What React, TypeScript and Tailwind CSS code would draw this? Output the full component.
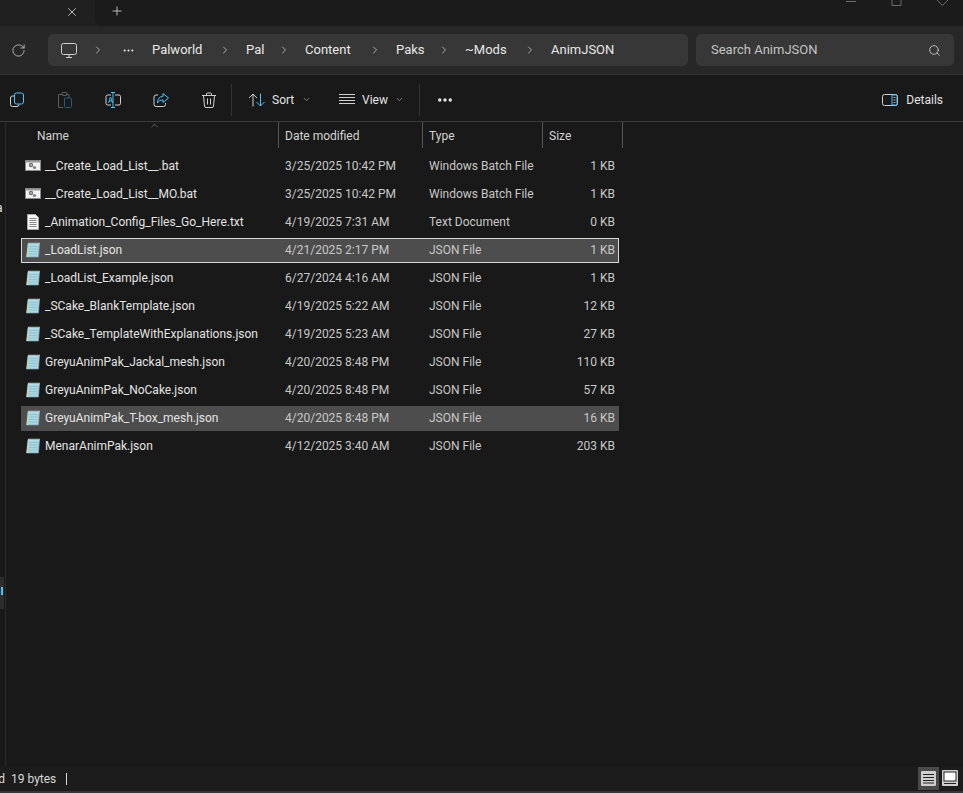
import { ChevronDown, ChevronRight, ChevronUp, MoreHorizontal, Plus, RotateCw, Search, X } from "lucide-react"

const font = "font-['Roboto','Liberation_Sans',sans-serif]"

interface FileRow {
  name: string
  date: string
  type: string
  size: string
  icon: "bat" | "txt" | "json"
  state?: "focus" | "selected"
}

const files: FileRow[] = [
  { name: "__Create_Load_List__.bat", date: "3/25/2025 10:42 PM", type: "Windows Batch File", size: "1 KB", icon: "bat" },
  { name: "__Create_Load_List__MO.bat", date: "3/25/2025 10:42 PM", type: "Windows Batch File", size: "1 KB", icon: "bat" },
  { name: "_Animation_Config_Files_Go_Here.txt", date: "4/19/2025 7:31 AM", type: "Text Document", size: "0 KB", icon: "txt" },
  { name: "_LoadList.json", date: "4/21/2025 2:17 PM", type: "JSON File", size: "1 KB", icon: "json", state: "focus" },
  { name: "_LoadList_Example.json", date: "6/27/2024 4:16 AM", type: "JSON File", size: "1 KB", icon: "json" },
  { name: "_SCake_BlankTemplate.json", date: "4/19/2025 5:22 AM", type: "JSON File", size: "12 KB", icon: "json" },
  { name: "_SCake_TemplateWithExplanations.json", date: "4/19/2025 5:23 AM", type: "JSON File", size: "27 KB", icon: "json" },
  { name: "GreyuAnimPak_Jackal_mesh.json", date: "4/20/2025 8:48 PM", type: "JSON File", size: "110 KB", icon: "json" },
  { name: "GreyuAnimPak_NoCake.json", date: "4/20/2025 8:48 PM", type: "JSON File", size: "57 KB", icon: "json" },
  { name: "GreyuAnimPak_T-box_mesh.json", date: "4/20/2025 8:48 PM", type: "JSON File", size: "16 KB", icon: "json", state: "selected" },
  { name: "MenarAnimPak.json", date: "4/12/2025 3:40 AM", type: "JSON File", size: "203 KB", icon: "json" },
]

function FileIcon({ kind }: { kind: FileRow["icon"] }) {
  if (kind === "bat") {
    return (
      <svg width="16" height="16" viewBox="0 0 16 16" className="shrink-0">
        <rect x="0.5" y="2.5" width="15" height="10" fill="#f2f2f2" stroke="#8a8a8a" />
        <rect x="1" y="3" width="14" height="1.5" fill="#9a9a9a" />
        <circle cx="6" cy="7" r="2.2" fill="#6f6f6f" />
        <circle cx="6" cy="7" r="0.8" fill="#e6e6e6" />
        <circle cx="9.5" cy="9.5" r="1.6" fill="#7f7f7f" />
      </svg>
    )
  }
  if (kind === "txt") {
    return (
      <svg width="16" height="16" viewBox="0 0 16 16" className="shrink-0">
        <path d="M2.5 0.5H10.5L13.5 3.5V15.5H2.5Z" fill="#f4f4f4" stroke="#a8a8a8" />
        <path d="M4.5 4.5H11.5M4.5 6.5H11.5M4.5 8.5H11.5M4.5 10.5H11.5M4.5 12.5H11.5" stroke="#8c8c8c" />
      </svg>
    )
  }
  return (
    <svg width="16" height="16" viewBox="0 0 16 16" className="shrink-0">
      <path d="M3 1.5H14.5L13.5 15H1.5Z" fill="#a9d6e2" stroke="#6ea5b5" strokeWidth="0.7" />
      <path d="M3 1.5H3.6V15H1.5Z" fill="#d9c9a6" />
      <path d="M4.5 4.5H13M4.2 7H12.8M4 9.5H12.6M3.8 12H12.4" stroke="#8dc0cf" strokeWidth="0.8" />
      <path d="M4 0.5V2.5M6 0.5V2.5M8 0.5V2.5M10 0.5V2.5M12 0.5V2.5M14 0.5V2.5" stroke="#f0f0f0" strokeWidth="0.8" />
    </svg>
  )
}

function ToolbarIcons() {
  return (
    <div className="flex items-center -ml-[7px]">
      <button className="w-[48px] flex justify-center">
        <svg width="16" height="16" viewBox="0 0 16 16" fill="none">
          <rect x="5.5" y="1" width="9" height="11" rx="2" stroke="#4cc2ff" />
          <path d="M5 4H3.5A2 2 0 0 0 1.5 6V12.5A2 2 0 0 0 3.5 14.5H8A2 2 0 0 0 10 12.5" stroke="#d0d0d0" />
        </svg>
      </button>
      <button className="w-[48px] flex justify-center">
        <svg width="16" height="16" viewBox="0 0 16 16" fill="none">
          <path d="M9 2.5H12V6M6 2.5H1.5V15.5H6" stroke="#5c5c5c" />
          <rect x="5" y="0.5" width="5" height="3" rx="1" stroke="#5c5c5c" />
          <rect x="7.5" y="6" width="7" height="9.5" rx="1" stroke="#235a78" />
        </svg>
      </button>
      <button className="w-[48px] flex justify-center">
        <svg width="16" height="16" viewBox="0 0 16 16" fill="none">
          <path d="M6 3H2.5A1.5 1.5 0 0 0 1 4.5V11.5A1.5 1.5 0 0 0 2.5 13H6M10 3H14A1.5 1.5 0 0 1 15.5 4.5V11.5A1.5 1.5 0 0 1 14 13H10" stroke="#d0d0d0" />
          <path d="M8 0.5V15.5M6 0.5H10M6 15.5H10" stroke="#4cc2ff" />
          <path d="M3.5 11L5.2 5.5H6L7.5 11M4.2 9H7" stroke="#4cc2ff" strokeWidth="0.9" />
        </svg>
      </button>
      <button className="w-[48px] flex justify-center">
        <svg width="16" height="16" viewBox="0 0 16 16" fill="none">
          <path d="M5 3H3A2 2 0 0 0 1 5V12.5A2 2 0 0 0 3 14.5H10.5A2 2 0 0 0 12.5 12.5V11" stroke="#d0d0d0" />
          <path d="M10 1.5L15.5 6L10 10.5V8C7 8 5.5 9 4.5 11C4.5 7 6.5 4.5 10 4.2Z" stroke="#4cc2ff" />
        </svg>
      </button>
      <button className="w-[48px] flex justify-center">
        <svg width="16" height="16" viewBox="0 0 16 16" fill="none" stroke="#d0d0d0">
          <path d="M1 3.5H15M5.5 3.5V2A1 1 0 0 1 6.5 1H9.5A1 1 0 0 1 10.5 2V3.5M2.5 3.5L3.5 14A1.5 1.5 0 0 0 5 15.5H11A1.5 1.5 0 0 0 12.5 14L13.5 3.5M6.5 6.5V12.5M9.5 6.5V12.5" />
        </svg>
      </button>
    </div>
  )
}

const crumbs = [
  { label: "Palworld", width: "w-[52px]" },
  { label: "Pal", width: "w-[17px]" },
  { label: "Content", width: "w-[49px]" },
  { label: "Paks", width: "w-[27px]" },
  { label: "~Mods", width: "w-[44px]" },
]

function Row({ file }: { file: FileRow }) {
  const rowStyle =
    file.state === "focus"
      ? "bg-[#4d4d4d] border border-[#d8d8d8]"
      : file.state === "selected"
        ? "bg-[#4d4d4d] border border-[#4d4d4d]"
        : "border border-transparent"
  return (
    <div className="h-[28px] flex items-center ml-[15px]">
      <div className={`w-[598px] h-[25px] flex items-center text-[12px] whitespace-nowrap ${rowStyle}`}>
        <div className="w-[259px] pl-[3px] flex items-center gap-[4px] text-[#e4e4e4]">
          <FileIcon kind={file.icon} />
          <span>{file.name}</span>
        </div>
        <div className="w-[144px] pl-[4px] text-[#c8c8c8]">{file.date}</div>
        <div className="w-[110px] pl-[4px] text-[#c8c8c8]">{file.type}</div>
        <div className="w-[80px] text-right text-[#c8c8c8]">{file.size}</div>
      </div>
    </div>
  )
}

export default function App() {
  return (
    <div className={`${font} w-[963px] h-[793px] flex flex-col bg-[#191919] overflow-hidden text-[#e4e4e4]`}>
      {/* Tabs */}
      <div className="h-[26px] shrink-0 flex bg-[#202020]">
        <div className="w-[95px] flex items-center justify-end pr-[16px] -mt-[2px]">
          <X size={14} strokeWidth={1.3} className="text-[#e8e8e8]" />
        </div>
        <div className="flex-1 flex bg-[#1b1b1b] rounded-bl-md pl-[15px] pr-[15px] justify-between">
          <Plus size={14} strokeWidth={1.3} className="text-[#e8e8e8] mt-[4px]" />
          <svg width="102" height="6" viewBox="0 0 102 6" fill="none" stroke="#6b6b6b">
            <path d="M0 1.5H10M46 0V5.5H55V0M91 0L96.5 5.5L102 0" />
          </svg>
        </div>
      </div>

      {/* Address bar */}
      <div className="h-[49px] shrink-0 flex items-center bg-[#272727] border-b border-[#333333]">
        <div className="w-[48px] flex justify-center pl-[1px] pr-[12px]">
          <RotateCw size={15} strokeWidth={1.2} className="text-[#d8d8d8]" />
        </div>
        <div className="w-[640px] h-[32px] rounded-[5px] bg-[#373737] flex items-center text-[13px] text-[#e8e8e8]">
          <svg width="16" height="15" viewBox="0 0 16 15" fill="none" className="ml-[13px]" stroke="#d0d0d0">
            <rect x="0.5" y="0.5" width="15" height="11" rx="2" />
            <path d="M5 14.5H11M8 12V14" />
          </svg>
          <ChevronRight size={12} strokeWidth={1.3} className="ml-[15px]" />
          <MoreHorizontal size={13} className="ml-[18px]" />
          <div className="flex items-center ml-[17px]">
            {crumbs.map((c) => (
              <div key={c.label} className="flex items-center">
                <span className={`${c.width} whitespace-nowrap`}>{c.label}</span>
                <ChevronRight size={12} strokeWidth={1.3} className="mx-[15px]" />
              </div>
            ))}
            <span>AnimJSON</span>
          </div>
        </div>
        <div className="ml-[8px] w-[258px] h-[32px] rounded-[5px] bg-[#373737] flex items-center justify-between pl-[15px] pr-[13px] text-[13px] text-[#c4c4c4]">
          <span>Search AnimJSON</span>
          <Search size={13} strokeWidth={1.5} className="text-[#d8d8d8]" />
        </div>
      </div>

      {/* Toolbar */}
      <div className="h-[47px] shrink-0 flex items-center border-b border-[#3a3a3a] pt-[3px] text-[12px]">
        <ToolbarIcons />
        <div className="w-px h-[32px] bg-[#333333] -ml-[2px]" />
        <div className="flex items-center gap-[6px] ml-[16px]">
          <svg width="18" height="14" viewBox="0 0 18 14" fill="none">
            <path d="M5 13.5V1M1 5L5 1L9 5" stroke="#d0d0d0" />
            <path d="M12.5 0.5V13M8.5 9L12.5 13L16.5 9" stroke="#4cc2ff" />
          </svg>
          <span className="w-[23px]">Sort</span>
          <ChevronDown size={9} className="text-[#a0a0a0] ml-[1px]" />
        </div>
        <div className="flex items-center gap-[7px] ml-[28px]">
          <svg width="16" height="11" viewBox="0 0 16 11" stroke="#d0d0d0">
            <path d="M0 0.5H16M0 3.5H16M0 6.5H16M0 9.5H16" />
          </svg>
          <span className="w-[26px]">View</span>
          <ChevronDown size={9} className="text-[#a0a0a0]" />
        </div>
        <div className="w-px h-[32px] bg-[#333333] ml-[15px]" />
        <MoreHorizontal size={18} strokeWidth={2.6} className="ml-[16px] text-[#e8e8e8]" />
        <div className="flex items-center gap-[8px] ml-auto mr-[20px]">
          <svg width="16" height="12" viewBox="0 0 16 12" fill="none">
            <rect x="0.5" y="0.5" width="15" height="11" rx="2" stroke="#d0d0d0" />
            <path d="M10 0.5V11.5" stroke="#4cc2ff" />
            <path d="M10.5 1H13.5A1.5 1.5 0 0 1 15 2.5V9.5A1.5 1.5 0 0 1 13.5 11H10.5" stroke="#4cc2ff" />
            <path d="M11.5 3.5H13.5M11.5 6H13.5M11.5 8.5H13.5" stroke="#d0d0d0" strokeWidth="0.8" />
          </svg>
          <span>Details</span>
        </div>
      </div>

      {/* Body */}
      <div className="flex-1 flex min-h-0">
        {/* Navigation pane sliver */}
        <div className="w-[6px] shrink-0 border-r border-[#2b2b2b] relative overflow-hidden">
          <span className="absolute top-[77px] -left-[4px] text-[12px]">a</span>
          <div className="absolute top-[455px] left-0 w-[4px] h-[32px] bg-[#2d2d2d]" />
          <div className="absolute top-[465px] left-[1px] w-[2px] h-[8px] bg-[#4cc2ff]" />
        </div>
        <div className="flex-1 min-w-0">
          {/* Column header */}
          <div className="h-[26px] flex text-[12px] text-[#d4d4d4] relative">
            <ChevronUp size={11} strokeWidth={1.2} className="absolute left-[143px] -top-[2px] text-[#a0a0a0]" />
            <div className="w-[273px] pl-[31px] pt-[5px] border-r border-[#555555]">Name</div>
            <div className="w-[144px] pl-[6px] pt-[5px] border-r border-[#555555]">Date modified</div>
            <div className="w-[120px] pl-[6px] pt-[5px] border-r border-[#555555]">Type</div>
            <div className="w-[80px] pl-[6px] pt-[5px] border-r border-[#555555]">Size</div>
          </div>
          <div className="pt-[4px]">
            {files.map((f) => (
              <Row key={f.name} file={f} />
            ))}
          </div>
        </div>
      </div>

      {/* Status bar */}
      <div className="h-[26px] shrink-0 flex items-center bg-[#1c1c1c] text-[12px] text-[#d8d8d8] border-b-2 border-[#3a3438]">
        <span className="w-[5px] overflow-hidden flex justify-end">d</span>
        <span className="ml-[6px]">19 bytes</span>
        <div className="w-px h-[12px] bg-[#d8d8d8] ml-[10px]" />
        <div className="ml-auto flex items-center mr-[3px] mb-[2px]">
          <div className="w-[21px] h-[23px] bg-[#4a4a4a] flex items-center justify-center">
            <svg width="15" height="15" viewBox="0 0 15 15">
              <rect width="15" height="15" rx="1" fill="#cfcfcf" />
              <path d="M2 3.5H13M2 6.5H13M2 9.5H13M2 12H13" stroke="#222" />
            </svg>
          </div>
          <div className="w-[20px] flex justify-center ml-[1px]">
            <svg width="16" height="16" viewBox="0 0 16 16">
              <rect width="16" height="16" rx="1" fill="#cfcfcf" />
              <rect x="2" y="2" width="12" height="9" fill="#fff" stroke="#222" />
              <path d="M2 13.5H14" stroke="#222" />
            </svg>
          </div>
        </div>
      </div>
    </div>
  )
}
